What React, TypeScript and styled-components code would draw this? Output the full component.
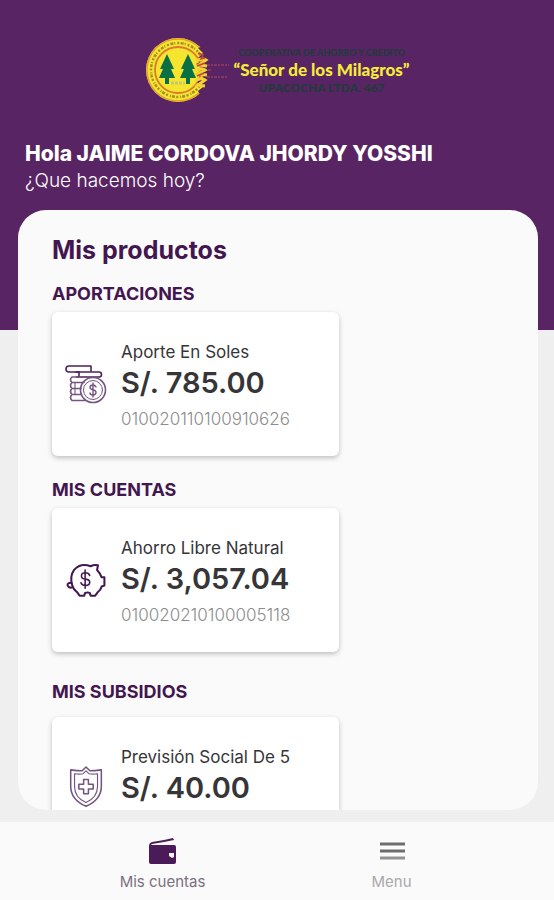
import React from "react";
import styled, { createGlobalStyle } from "styled-components";

const GlobalStyle = createGlobalStyle`
  * { box-sizing: border-box; }
  body { margin: 0; font-family: Inter, "Open Sans", sans-serif; color: #363538; }
  h1, h2, h3, p { margin: 0; font-weight: 400; }
`;

const Screen = styled.div`
  display: flex;
  flex-direction: column;
  height: 100vh;
  background: linear-gradient(#592463 330px, #efefef 330px);
`;

const Header = styled.header`
  flex: none;
  padding: 36px 24px 16px 25px;
  color: #fff;
`;

const Brand = styled.div`
  display: flex;
  align-items: center;
  justify-content: center;
  gap: 2px;
  height: 68px;
`;

const Seal = styled.svg`
  flex: none;
  width: 86px;
  height: 68px;
`;

const BrandText = styled.div`
  display: flex;
  flex-direction: column;
  align-items: center;
  white-space: nowrap;
  font-family: Lato, sans-serif;
  font-weight: 900;
`;

const BrandSmall = styled.span<{ $size: number }>`
  color: #213b3c;
  font-size: ${(p) => p.$size}px;
  line-height: 15px;
`;

const BrandName = styled.strong`
  color: #f6ec38;
  font-size: 17px;
  font-weight: 900;
  line-height: 20px;
`;

const Greeting = styled.h1`
  margin-top: 37px;
  font-size: 21px;
  font-weight: 800;
  line-height: 26px;
`;

const Question = styled.p`
  font-size: 19px;
  font-weight: 300;
  line-height: 27px;
`;

const Sheet = styled.main`
  flex: 1;
  min-height: 0;
  margin: 0 16px 12px 18px;
  padding: 24px 34px 0;
  overflow-y: auto;
  scrollbar-width: none;
  background: #fafafa;
  border-radius: 28px;
`;

const Title = styled.h2`
  color: #431650;
  font-size: 25px;
  font-weight: 700;
  line-height: 32px;
`;

const Section = styled.section<{ $top: number; $gap: number }>`
  display: flex;
  flex-direction: column;
  gap: ${(p) => p.$gap}px;
  margin-top: ${(p) => p.$top}px;
`;

const SectionTitle = styled.h3`
  color: #431650;
  font-size: 18px;
  font-weight: 700;
  line-height: 20px;
`;

const Card = styled.article`
  display: flex;
  align-items: center;
  width: 287px;
  max-width: 100%;
  height: 144px;
  padding: 0 12px;
  gap: 12px;
  background: #fff;
  border-radius: 6px;
  box-shadow: 0 2px 5px rgba(0, 0, 0, 0.24);
`;

const CardBody = styled.div`
  align-self: flex-start;
  padding-top: 28px;
`;

const CardIcon = styled.svg<{ $dark?: boolean }>`
  flex: none;
  width: 45px;
  height: 45px;
  overflow: visible;
  fill: none;
  stroke: ${(p) => (p.$dark ? "#431650" : "#745480")};
  stroke-linecap: round;
  stroke-linejoin: round;
`;

const Product = styled.p`
  font-size: 17px;
  line-height: 24px;
`;

const Amount = styled.p`
  font-size: 29px;
  font-weight: 600;
  line-height: 38px;
`;

const Account = styled.p`
  color: #8c8c8c;
  font-size: 17px;
  font-weight: 300;
  line-height: 34px;
`;

const Nav = styled.nav`
  flex: none;
  display: grid;
  grid-template-columns: 1fr 1fr;
  height: 78px;
  padding: 0 48px;
  background: #fafafa;
`;

const NavButton = styled.button<{ $active?: boolean }>`
  display: flex;
  flex-direction: column;
  align-items: center;
  gap: 5px;
  padding: 13px 0 0;
  border: 0;
  background: none;
  color: ${(p) => (p.$active ? "#7c6f81" : "#aaa8ab")};
  font-family: inherit;
  font-size: 15px;
  line-height: 20px;
`;

const NavIcon = styled.svg`
  width: 32px;
  height: 32px;
`;

function CoinsIcon() {
  return (
    <CardIcon viewBox="0 0 45 45" strokeWidth="1.6" aria-hidden="true">
      <path d="M27 9V4H5a3 3 0 0 0 0 6h10v4" stroke="#4a2258" />
      <path d="M12 10h23a2.500 2.500 0 0 1 0 5H12" stroke="#4a2258" />
      <path d="M11 15H8q-3 2.500 0 5.500h12M8 20.500q-3 3 0 6h9M8 26.500q-3 3 0 6h9M8 32.500q-3 3 0 6h13" />
      <path d="M11 21v5m0 1v5" strokeWidth="1.100" />
      <circle cx="29" cy="28" r="12.500" />
      <circle cx="29" cy="28" r="9.500" strokeWidth="1" />
      <path d="M32 25q-1-2-3-2-3 0-3 2.300 0 2 3 2.500 3 .6 3 2.800 0 2.400-3 2.400t-3-2M29 21v14" strokeWidth="1.400" />
    </CardIcon>
  );
}

function PigIcon() {
  return (
    <CardIcon $dark viewBox="-2 -3 49 49" strokeWidth="2.200" aria-hidden="true">
      <path d="M27 6Q16 2 9 10q-5 7-2 17 1 4 5 7l3 4h5l1-3q3-1 5 0l1 3h5l3-4q3-2 4-6l3-1v-9h-3q-2-5-5-8l1-5q-4-1-8 1z" />
      <path d="M6 24q-5 0-4 3t5 2" />
      <path d="M26 16q-1-3-5-3-4 0-4 3.500 0 3 4.500 3.500 4.500.5 4.500 3.500 0 3.500-4.500 3.500-4 0-5-3M21 10v20" strokeWidth="1.700" />
    </CardIcon>
  );
}

function ShieldIcon() {
  return (
    <CardIcon viewBox="-1 2 47 47" strokeWidth="1.600" aria-hidden="true">
      <path d="M22 2l4 4q5 0 12-1v17q0 14-16 21Q6 36 6 22V5q7 1 12 1z" />
      <path d="M22 6l3 3q4 1 9 0v13q0 12-12 17Q10 34 10 22V9q5 1 9 0z" strokeWidth="1.200" />
      <path d="M19.500 15h5v5h5v5h-5v5h-5v-5h-5v-5h5z" />
    </CardIcon>
  );
}

function CooperativeSeal() {
  return (
    <Seal viewBox="0 0 86 68" aria-hidden="true">
      <circle cx="33" cy="34" r="32" fill="#f5e52f" />
      <circle cx="33" cy="34" r="31" fill="none" stroke="#e2a130" strokeWidth="1.500" />
      <circle cx="33" cy="34" r="27" fill="none" stroke="#a58d2e" strokeWidth="2.500" strokeDasharray="2 1.500 3 1 1 2" />
      <circle cx="33" cy="34" r="23" fill="none" stroke="#de7931" strokeWidth="1.800" />
      <path d="M70 6L53 12l5 5-5 5 6 2-8 4 7 5-7 5 8 3-7 5 6 5-5 4 3 5 14 0z" fill="#592463" />
      <path d="M51 25q6-4 10-1l-7 5 8 1M50 35q6-4 10-1l-7 4 9 1M50 45q6-4 10-1l-7 5 7 1" fill="none" stroke="#f3d234" strokeWidth="3" />
      <path d="M53 17l5 2-2 4 4-1M52 30l8-3M52 40l7-3" fill="none" stroke="#c3413c" strokeWidth="1.500" />
      <path d="M22 18l-7 15h3l-4 9h6v6h4v-6h6l-4-9h3zM43 18l-7 15h3l-4 9h6v6h4v-6h6l-4-9h3z" fill="#087044" />
      <path d="M26 47h14" stroke="#c9c870" strokeWidth="3" strokeDasharray="3 1" />
      <path d="M62 29h22M63 34h4M62 41h20" stroke="#963c62" strokeWidth="1.600" strokeDasharray="3 1 2 1" />
    </Seal>
  );
}

const sections = [
  { title: "APORTACIONES", product: "Aporte En Soles", amount: "S/. 785.00", account: "010020110100910626", Icon: CoinsIcon, top: 18, gap: 8 },
  { title: "MIS CUENTAS", product: "Ahorro Libre Natural", amount: "S/. 3,057.04", account: "010020210100005118", Icon: PigIcon, top: 24, gap: 8 },
  { title: "MIS SUBSIDIOS", product: "Previsión Social De 5", amount: "S/. 40.00", account: "", Icon: ShieldIcon, top: 30, gap: 15 },
];

export default function App() {
  return (
    <>
      <GlobalStyle />
      <Screen>
        <Header>
          <Brand>
            <CooperativeSeal />
            <BrandText>
              <BrandSmall $size={9}>COOPERATIVA DE AHORRO Y CREDITO</BrandSmall>
              <BrandName>“Señor de los Milagros”</BrandName>
              <BrandSmall $size={12}>UPACOCHA LTDA. 467</BrandSmall>
            </BrandText>
          </Brand>
          <Greeting>Hola JAIME CORDOVA JHORDY YOSSHI</Greeting>
          <Question>¿Que hacemos hoy?</Question>
        </Header>
        <Sheet>
          <Title>Mis productos</Title>
          {sections.map(({ title, product, amount, account, Icon, top, gap }) => (
            <Section key={title} $top={top} $gap={gap}>
              <SectionTitle>{title}</SectionTitle>
              <Card>
                <Icon />
                <CardBody>
                  <Product>{product}</Product>
                  <Amount>{amount}</Amount>
                  {account && <Account>{account}</Account>}
                </CardBody>
              </Card>
            </Section>
          ))}
        </Sheet>
        <Nav>
          <NavButton $active type="button">
            <NavIcon viewBox="0 0 32 32" aria-hidden="true">
              <path d="M4 10h23q2 0 2 2v15q0 2-2 2H4q-2 0-2-2V11q0-3 3-4l12-2 9-2 1 2-10 2-12 2z" fill="#4b1b59" />
              <path d="M22 18h5v4l-2 1-3-2z" fill="#fafafa" />
            </NavIcon>
            Mis cuentas
          </NavButton>
          <NavButton type="button">
            <NavIcon viewBox="0 0 32 32" aria-hidden="true">
              <path d="M4 9h25M4 16h25" stroke="#6d6d6d" strokeWidth="3" />
              <path d="M4 23h25" stroke="#929292" strokeWidth="3" />
            </NavIcon>
            Menu
          </NavButton>
        </Nav>
      </Screen>
    </>
  );
}
